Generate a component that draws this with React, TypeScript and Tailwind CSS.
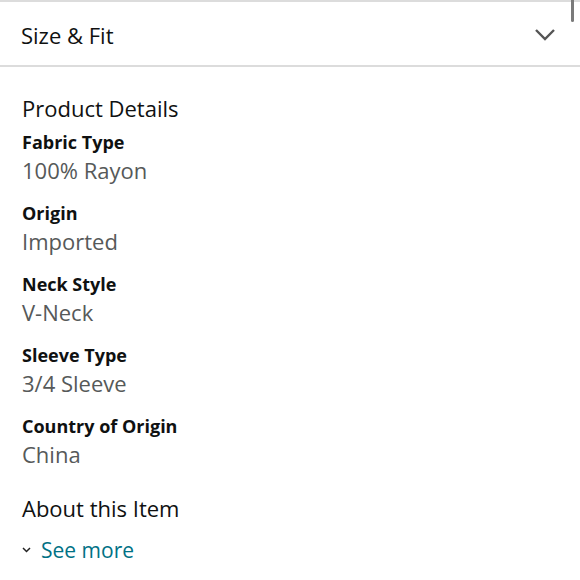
import React from "react";

const details = [
  { label: "Fabric Type", value: "100% Rayon" },
  { label: "Origin", value: "Imported" },
  { label: "Neck Style", value: "V-Neck" },
  { label: "Sleeve Type", value: "3/4 Sleeve" },
  { label: "Country of Origin", value: "China" },
];

export default function App() {
  return (
    <div
      className="relative w-[580px] h-[580px] overflow-hidden bg-white text-[#0f1111]"
      style={{ fontFamily: '"Open Sans", "Noto Sans", sans-serif' }}
    >
      {/* scroll thumb */}
      <div className="absolute right-[6px] top-0 w-[3px] h-[22px] rounded-b-full bg-[#7a7a7a]" />

      {/* Size & Fit header */}
      <div className="h-[67px] border-t-2 border-b-2 border-[#dcdcdc] flex items-center justify-between pt-[3px] pl-[21px] pr-[24px]">
        <span className="text-[22px] leading-[28px]">Size &amp; Fit</span>
        <svg width="22" height="14" viewBox="0 0 22 14" fill="none">
          <polyline points="2,2 11,11 20,2" stroke="#555" strokeWidth="2.4" />
        </svg>
      </div>

      <div className="px-[22px] pt-[27px]">
        <h2 className="text-[22px] leading-[28px]">Product Details</h2>

        <div className="mt-[9px] flex flex-col gap-[18px]">
          {details.map((d) => (
            <div key={d.label} className="flex flex-col gap-[3px]">
              <span className="text-[18px] leading-[22px] font-bold">{d.label}</span>
              <span className="text-[22px] leading-[28px] text-[#565959]">{d.value}</span>
            </div>
          ))}
        </div>

        <h2 className="mt-[26px] text-[22px] leading-[28px]">About this Item</h2>

        <button className="mt-[14px] flex items-center gap-[10px] text-[21px] leading-[28px] text-[#007185]">
          <svg width="9" height="6" viewBox="0 0 9 6" fill="none">
            <polyline points="1,1 4.5,4.5 8,1" stroke="#222" strokeWidth="1.5" />
          </svg>
          See more
        </button>
      </div>
    </div>
  );
}
